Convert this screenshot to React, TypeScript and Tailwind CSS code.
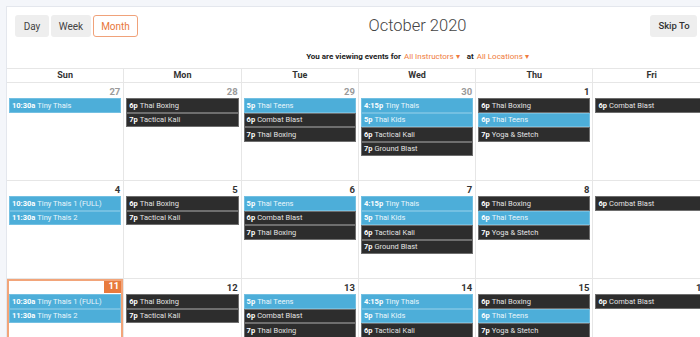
type Ev = { t: string; n: string; c: "b" | "d" };
type Day = { d: number; other?: boolean; today?: boolean; ev: Ev[] };

const B = (t: string, n: string): Ev => ({ t, n, c: "b" });
const D = (t: string, n: string): Ev => ({ t, n, c: "d" });

const mon = [D("6p", "Thai Boxing"), D("7p", "Tactical Kali")];
const tue = [B("5p", "Thai Teens"), D("6p", "Combat Blast"), D("7p", "Thai Boxing")];
const wed = [B("4:15p", "Tiny Thais"), B("5p", "Thai Kids"), D("6p", "Tactical Kali"), D("7p", "Ground Blast")];
const thu = [D("6p", "Thai Boxing"), B("6p", "Thai Teens"), D("7p", "Yoga & Stetch")];
const fri = [D("6p", "Combat Blast")];
const sun2 = [B("10:30a", "Tiny Thais 1 (FULL)"), B("11:30a", "Tiny Thais 2")];

const weeks: Day[][] = [
  [
    { d: 27, other: true, ev: [B("10:30a", "Tiny Thais")] },
    { d: 28, other: true, ev: mon },
    { d: 29, other: true, ev: tue },
    { d: 30, other: true, ev: wed },
    { d: 1, ev: thu },
    { d: 2, ev: fri },
    { d: 3, ev: [] },
  ],
  [
    { d: 4, ev: sun2 },
    { d: 5, ev: mon },
    { d: 6, ev: tue },
    { d: 7, ev: wed },
    { d: 8, ev: thu },
    { d: 9, ev: fri },
    { d: 10, ev: [] },
  ],
  [
    { d: 11, today: true, ev: sun2 },
    { d: 12, ev: mon },
    { d: 13, ev: tue },
    { d: 14, ev: wed },
    { d: 15, ev: thu },
    { d: 16, ev: fri },
    { d: 17, ev: [] },
  ],
];

const names = ["Sun", "Mon", "Tue", "Wed", "Thu", "Fri", "Sat"];

function Event({ e }: { e: Ev }) {
  const blue = e.c === "b";
  return (
    <div
      className={`mx-[2px] h-[14.6px] flex items-center px-[2px] text-[7.5px] leading-none whitespace-nowrap overflow-hidden border ${
        blue ? "bg-[#4daed9] border-[#73c0e2]" : "bg-[#2d2d2d] border-[#6e6e6e]"
      }`}
    >
      <span className="font-bold text-white mr-[2px]">{e.t}</span>
      <span className={blue ? "text-[#eaf6fb]" : "text-[#e2e2e2]"}>{e.n}</span>
    </div>
  );
}

function Cell({ day, last }: { day: Day; last: boolean }) {
  return (
    <div
      className={`relative h-[98px] ${last ? "" : "border-r border-[#e6e6e6]"} border-b border-[#e6e6e6]`}
    >
      {day.today && <div className="absolute inset-0 border-2 border-[#f2a57a] pointer-events-none" />}
      <div className="h-[15px] flex justify-end items-start">
        {day.today ? (
          <span className="h-[14px] px-[4px] bg-[#e87a3d] text-white text-[9.5px] font-bold leading-[14px]">{day.d}</span>
        ) : (
          <span
            className={`pr-[3px] pt-[4px] text-[9.5px] font-bold leading-none ${
              day.other ? "text-[#9a9a9a]" : "text-[#333]"
            }`}
          >
            {day.d}
          </span>
        )}
      </div>
      <div className="flex flex-col">
        {day.ev.map((e, i) => (
          <Event key={i} e={e} />
        ))}
      </div>
    </div>
  );
}

export default function App() {
  return (
    <div
      className="w-[700px] h-[337px] overflow-hidden bg-[#f4f6fa] pl-[6px] pt-[6px]"
      style={{ fontFamily: "Roboto, 'Liberation Sans', sans-serif" }}
    >
      <div className="w-[822px] bg-white border-l border-t border-[#e4e7ed]">
        <div className="grid grid-cols-[1fr_auto_1fr] items-start h-[42px] pt-[8px]">
          <div className="flex gap-[2px] pl-[8px]">
            <button className="h-[22px] w-[34px] rounded-[3px] bg-[#eeeeee] text-[10px] text-[#444]">Day</button>
            <button className="h-[22px] w-[40px] rounded-[3px] bg-[#eeeeee] text-[10px] text-[#444]">Week</button>
            <button className="h-[22px] w-[45px] rounded-[3px] bg-white border border-[#f0a27a] text-[10px] text-[#e8773a]">
              Month
            </button>
          </div>
          <div className="text-[16.5px] font-light text-[#444] leading-none pt-[3px]">October 2020</div>
          <div className="pl-[184px] -mt-[3px]">
            <button className="h-[22px] w-[47px] rounded-[3px] bg-[#eeeeee] text-[9.5px] font-medium text-[#333]">
              Skip To
            </button>
          </div>
        </div>
        <div className="h-[19px] flex justify-center items-start pt-[2px] text-[8px] text-[#222]">
          <span className="font-bold">You are viewing events for</span>
          <span className="ml-[3px] text-[#ef7b3d]">All Instructors ▾</span>
          <span className="ml-[7px] font-bold">at</span>
          <span className="ml-[3px] text-[#ef7b3d]">All Locations ▾</span>
        </div>
        <div className="grid grid-cols-[repeat(7,117.3px)] border-t border-[#e6e6e6]">
          {names.map((n, i) => (
            <div
              key={n}
              className={`h-[14px] flex items-center justify-center text-[9px] font-bold text-[#333] border-b border-[#e6e6e6] ${
                i < 6 ? "border-r" : ""
              }`}
            >
              {n}
            </div>
          ))}
          {weeks.flat().map((d, i) => (
            <Cell key={i} day={d} last={i % 7 === 6} />
          ))}
        </div>
      </div>
    </div>
  );
}
